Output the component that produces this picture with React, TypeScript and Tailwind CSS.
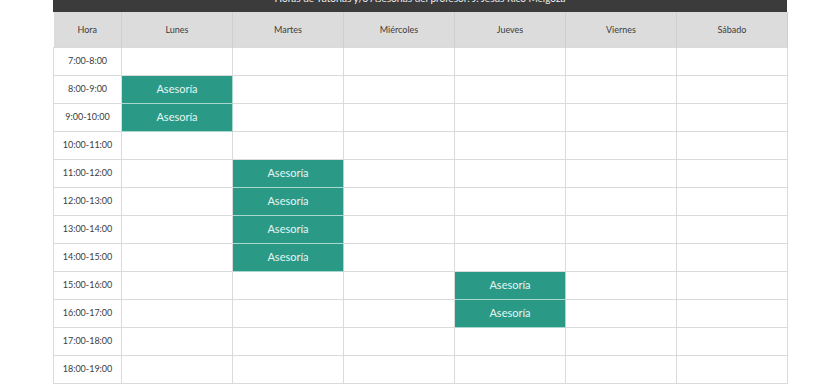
import React from 'react';

// días de la semana
const dias = ['Lunes', 'Martes', 'Miércoles', 'Jueves', 'Viernes', 'Sábado'];

const horas = [
  '7:00-8:00', '8:00-9:00', '9:00-10:00', '10:00-11:00', '11:00-12:00', '12:00-13:00',
  '13:00-14:00', '14:00-15:00', '15:00-16:00', '16:00-17:00', '17:00-18:00', '18:00-19:00',
];

// celdas ocupadas: hora -> índices de día
const asesorias: Record<string, number[]> = {
  '8:00-9:00': [0],
  '9:00-10:00': [0],
  '11:00-12:00': [1],
  '12:00-13:00': [1],
  '13:00-14:00': [1],
  '14:00-15:00': [1],
  '15:00-16:00': [3],
  '16:00-17:00': [3],
};

export default function App() {
  return (
    <div className="w-[840px] h-[385px] overflow-hidden bg-white font-['Lato','Liberation_Sans',sans-serif]">
      <div className="w-[734px] mx-auto">
        <div className="h-[12px] bg-[#3b3b3b] overflow-hidden flex justify-center">
          <div className="-mt-[8px] text-[10px] leading-[12px] text-[#f2f2f2] whitespace-nowrap">
            Horas de Tutorías y/o Asesorías del profesor: J. Jesús Rico Melgoza
          </div>
        </div>
        <table className="w-[734px] table-fixed border-collapse text-[9px] text-[#3c3c3c]">
          <colgroup>
            <col className="w-[68px]" />
            {dias.map((d) => (
              <col key={d} className="w-[111px]" />
            ))}
          </colgroup>
          <thead>
            <tr className="h-[35px] bg-[#dcdcdc]">
              <th className="font-normal border-r border-[#cfcfcf]">Hora</th>
              {dias.map((d) => (
                <th key={d} className="font-normal border-r border-[#cfcfcf]">{d}</th>
              ))}
            </tr>
          </thead>
          <tbody>
            {horas.map((h) => (
              <tr key={h} className="h-[28px]">
                <td className="text-center border border-[#dadada]">{h}</td>
                {dias.map((d, i) => {
                  const ocupada = (asesorias[h] || []).includes(i);
                  return ocupada ? (
                    <td
                      key={d}
                      className="text-center bg-[#2a9a87] text-[#e6f6f2] text-[11px] border border-[#a9d8cf]"
                    >
                      Asesoría
                    </td>
                  ) : (
                    <td key={d} className="border border-[#dadada]" />
                  );
                })}
              </tr>
            ))}
          </tbody>
        </table>
      </div>
    </div>
  );
}
